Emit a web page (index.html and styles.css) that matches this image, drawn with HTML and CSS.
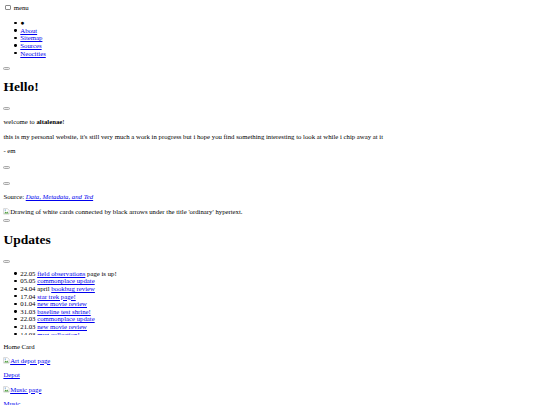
FILE: index.html
```html
<!DOCTYPE html>
<html lang="en">
<head>
<meta charset="utf-8">
<title>altalenae</title>
<link rel="stylesheet" href="styles.css">
</head>
<body class="page">
<div class="menu-toggle"><input type="checkbox" id="menu" class="menu-box"> <label for="menu">menu</label></div>
<ul class="list nav">
<li class="item"><span class="dot">&#9679;</span></li>
<li class="item"><a href="#">About</a></li>
<li class="item"><a href="#">Sitemap</a></li>
<li class="item"><a href="#">Sources</a></li>
<li class="item"><a href="#">Neocities</a></li>
</ul>
<div class="line-btn"><button class="btn"></button></div>
<h1 class="title">Hello!</h1>
<div class="line-btn"><button class="btn"></button></div>
<p class="para">welcome to <b>altalenae</b>!</p>
<p class="para">this is my personal website, it's still very much a work in progress but i hope you find something interesting to look at while i chip away at it</p>
<p class="para">- em</p>
<div class="line-btn"><button class="btn"></button></div>
<div class="line-btn spaced"><button class="btn"></button></div>
<p class="para">Source: <a href="#"><i>Data, Metadata, and Ted</i></a></p>
<div class="line"><svg class="bicon" viewBox="0 0 16 16" width="16" height="16"><path d="M1.5 1.5h9l4 4v9h-13z" fill="#fff" stroke="#a0a0a0"/><path d="M3 13l3-4.5 2 2.5 2-3 3.5 5z" fill="#4e9b3c"/><circle cx="5.5" cy="5" r="1.6" fill="#5b95d6"/></svg>Drawing of white cards connected by black arrows under the title 'ordinary' hypertext.</div>
<div class="line-btn near"><button class="btn"></button></div>
<h1 class="title">Updates</h1>
<div class="line-btn"><button class="btn"></button></div>
<div class="updates">
<ul class="list upd-list">
<li class="item">22.05 <a href="#">field observations</a> page is up!</li>
<li class="item">05.05 <a href="#">commonplace update</a></li>
<li class="item">24.04 april <a href="#">bookbug review</a></li>
<li class="item">17.04 <a href="#">star trek page!</a></li>
<li class="item">01.04 <a href="#">new movie review</a></li>
<li class="item">31.03 <a href="#">baseline test shrine!</a></li>
<li class="item">22.03 <a href="#">commonplace update</a></li>
<li class="item">21.03 <a href="#">new movie review</a></li>
<li class="item">14.03 <a href="#">mug collection!</a></li>
<li class="item">10.03 <a href="#">new movie review</a></li>
</ul>
</div>
<div class="line">Home Card</div>
<p class="para"><a href="#"><svg class="bicon" viewBox="0 0 16 16" width="16" height="16"><path d="M1.5 1.5h9l4 4v9h-13z" fill="#fff" stroke="#a0a0a0"/><path d="M3 13l3-4.5 2 2.5 2-3 3.5 5z" fill="#4e9b3c"/><circle cx="5.5" cy="5" r="1.6" fill="#5b95d6"/></svg>Art depot page</a></p>
<p class="para"><a href="#">Depot</a></p>
<p class="para"><a href="#"><svg class="bicon" viewBox="0 0 16 16" width="16" height="16"><path d="M1.5 1.5h9l4 4v9h-13z" fill="#fff" stroke="#a0a0a0"/><path d="M3 13l3-4.5 2 2.5 2-3 3.5 5z" fill="#4e9b3c"/><circle cx="5.5" cy="5" r="1.6" fill="#5b95d6"/></svg>Music page</a></p>
<p class="para"><a href="#">Music</a></p>
</body>
</html>
```
FILE: styles.css
```css
.page {
  margin: 3.4px;
  font-family: "Liberation Serif", "Times New Roman", serif;
  font-size: 6.75px;
  line-height: 7.6px;
  color: #000;
  background: #fff;
}
a {
  color: #0000ee;
}
.menu-box {
  -webkit-appearance: none;
  appearance: none;
  box-sizing: border-box;
  width: 5.6px;
  height: 5.6px;
  margin: 1.3px 1.3px 1.3px 1.7px;
  border: 1px solid #8a8a8a;
  border-radius: 1px;
  background: #fff;
  vertical-align: -0.8px;
}
.list {
  margin: 6.75px 0;
  padding-left: 16.9px;
  list-style: none;
}
.list.nav {
  margin-bottom: 4.75px;
}
.item::before {
  content: "";
  display: inline-block;
  width: 2.3px;
  height: 2.3px;
  border-radius: 50%;
  background: #000;
  margin-left: -6px;
  margin-right: 3.7px;
  vertical-align: 1.2px;
}
.title {
  font-size: 13.5px;
  line-height: 14.6px;
  margin: 9px 0 7.5px;
}
.para {
  margin: 6.75px 0;
}
.line-btn {
  box-sizing: border-box;
  height: 9.25px;
  padding-top: 4.95px;
}
.line-btn.spaced {
  margin-top: 6.75px;
}
.line-btn.near {
  height: 9.15px;
  padding-top: 3.85px;
}
.btn {
  display: block;
  box-sizing: border-box;
  width: 7px;
  height: 3px;
  padding: 0;
  border: 1px solid #a9a9a9;
  border-radius: 1.5px;
  background: #ececec;
}
.dot {
  font-size: 6.75px;
}
.bicon {
  width: 6.75px;
  height: 6.75px;
  vertical-align: -1px;
}
.updates {
  height: 65.5px;
  margin: 5.25px 0 7.2px;
  overflow: hidden;
}
.upd-list {
  margin: 0;
}
```
